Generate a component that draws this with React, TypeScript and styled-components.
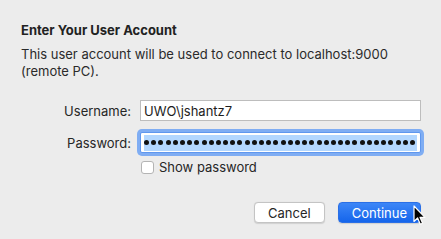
import React from "react";
import styled, { createGlobalStyle } from "styled-components";

const Global = createGlobalStyle`
  html, body { margin: 0; padding: 0; background: #ececec; }
  body { font-family: Inter, "Liberation Sans", sans-serif; color: #262626; -webkit-font-smoothing: antialiased; }
`;

const Window = styled.div`
  width: 441px;
  height: 239px;
  box-sizing: border-box;
  background: #ececec;
  padding: 22px 20px 0 21px;
  display: flex;
  flex-direction: column;
  position: relative;
  overflow: hidden;
`;

const Title = styled.div`
  font-size: 13px;
  font-weight: 700;
  line-height: 16px;
  color: #222;
`;

const Message = styled.div`
  margin-top: 8px;
  font-size: 13px;
  line-height: 17px;
  color: #2a2a2a;
  width: 380px;
`;

const Form = styled.div`
  margin-top: 20px;
  display: grid;
  grid-template-columns: 110px 281px;
  column-gap: 9px;
  row-gap: 0;
  align-items: center;
`;

const Label = styled.div`
  font-size: 13px;
  text-align: right;
  color: #262626;
`;

const Field = styled.div<{ $focused?: boolean }>`
  height: 21px;
  box-sizing: border-box;
  background: #fff;
  border: 1px solid ${(p) => (p.$focused ? "#5f97ee" : "#bdbdbd")};
  box-shadow: ${(p) => (p.$focused ? "0 0 0 3px #7fadf3" : "none")};
  border-radius: ${(p) => (p.$focused ? "2px" : "0")};
  display: flex;
  align-items: center;
  padding: 0 3px;
  font-size: 13px;
  color: #1d1d1d;
  margin: ${(p) => (p.$focused ? "11px 0 0" : "0")};
`;

const Selection = styled.span`
  background: #b3d7ff;
  height: 16px;
  display: flex;
  align-items: center;
  flex: 1;
  overflow: hidden;
  white-space: nowrap;
  letter-spacing: 0;
`;

const Dot = styled.span`
  width: 5px;
  height: 5px;
  border-radius: 50%;
  background: #111;
  margin-right: 2.2px;
  flex: none;
`;

const CheckRow = styled.label`
  grid-column: 2;
  display: flex;
  align-items: center;
  gap: 5px;
  margin-top: 6px;
  font-size: 13px;
  color: #262626;
`;

const Box = styled.span`
  width: 13px;
  height: 13px;
  box-sizing: border-box;
  border: 1px solid #b4b4b4;
  border-radius: 3px;
  background: #fff;
  margin-left: 1px;
`;

const Buttons = styled.div`
  margin-top: 27px;
  display: flex;
  justify-content: flex-end;
  gap: 13px;
  padding-right: 0;
`;

const Button = styled.div<{ $primary?: boolean }>`
  height: 21px;
  box-sizing: border-box;
  padding: 0 ${(p) => (p.$primary ? "13px" : "13px")};
  min-width: ${(p) => (p.$primary ? "80px" : "69px")};
  border-radius: 4px;
  display: flex;
  align-items: center;
  justify-content: center;
  font-size: 13px;
  color: ${(p) => (p.$primary ? "#fff" : "#262626")};
  background: ${(p) => (p.$primary ? "linear-gradient(#3c86f7, #1565eb)" : "#fff")};
  border: 1px solid ${(p) => (p.$primary ? "#2a6fe6" : "#c4c4c4")};
  box-shadow: 0 0.5px 1px rgba(0,0,0,0.12);
`;

const Cursor = styled.svg`
  position: absolute;
  left: 413px;
  top: 205px;
`;

export default function App() {
  return (
    <>
      <Global />
      <Window>
        <Title>Enter Your User Account</Title>
        <Message>This user account will be used to connect to localhost:9000 (remote PC).</Message>
        <Form>
          <Label>Username:</Label>
          <Field>UWO\jshantz7</Field>
          <Label style={{ marginTop: 11 }}>Password:</Label>
          <Field $focused>
            <Selection>
              {Array.from({ length: 38 }).map((_, i) => (
                <Dot key={i} />
              ))}
            </Selection>
          </Field>
          <CheckRow>
            <Box />
            Show password
          </CheckRow>
        </Form>
        <Buttons>
          <Button>Cancel</Button>
          <Button $primary>Continue</Button>
        </Buttons>
        <Cursor width="14" height="22" viewBox="0 0 14 22">
          <path d="M1 1 L1 16.5 L4.6 13 L7.3 19.3 L9.6 18.3 L7 12.3 L12 12.3 Z" fill="#000" stroke="#fff" strokeWidth="1.2" strokeLinejoin="round" />
        </Cursor>
      </Window>
    </>
  );
}
